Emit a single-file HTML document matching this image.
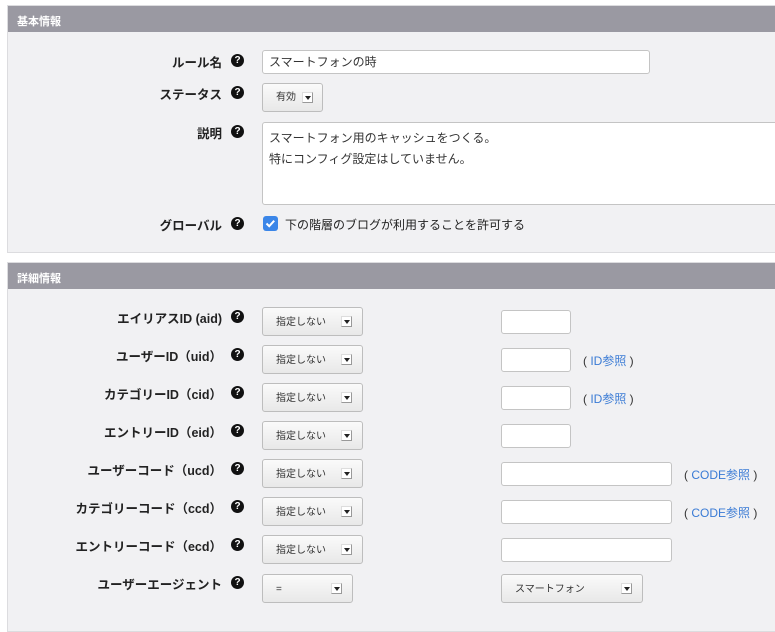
<!DOCTYPE html>
<html><head><meta charset="utf-8"><style>
*{box-sizing:border-box;margin:0;padding:0}
body{width:775px;height:620px;overflow:hidden;background:#fff;font-family:"Liberation Sans","Noto Sans CJK JP",sans-serif;font-size:12px;color:#333;position:relative}
.panel{position:absolute;left:7px;width:780px;background:#f1f1f3;border:1px solid #dcdcdf}
.hd{height:26px;background:#9a99a2;color:#fff;font-weight:bold;font-size:11px;padding:7px 0 0 9px}
.ab{position:absolute}
.lbl{position:absolute;right:553px;font-weight:bold;font-size:12.5px;color:#222;white-space:nowrap;margin-top:-2px}
.q{position:absolute;left:231px;width:13px;height:13px;border-radius:50%;background:#111;color:#fff;font-size:10px;font-weight:bold;text-align:center;line-height:13px}
.inp{position:absolute;background:#fff;border:1px solid #c4c4c4;border-radius:3px;font-size:12px;padding:0 6px}
.sel{position:absolute;background:linear-gradient(#fafafa,#e8e8e8);border:1px solid #bdbdbd;border-radius:3px;font-size:10px;color:#333;padding-left:13px}
.sel i{position:absolute;right:10px;top:8px;width:11px;height:11px;background:#fff;border:1px solid #999;border-top-color:#ddd;border-left-color:#ddd}
.sel i:after{content:"";position:absolute;left:2px;top:3px;border:3px solid transparent;border-top:4px solid #222}
.lk{position:absolute;color:#3a7bd5;font-size:12px}
.lk b{color:#333;font-weight:normal}
</style></head><body>
<div class="panel" style="top:5px;height:248px"><div class="hd">基本情報</div></div>
<div class="panel" style="top:262px;height:370px"><div class="hd">詳細情報</div></div>

<div class="lbl" style="top:54px">ルール名</div><div class="q" style="top:54px">?</div>
<div class="inp" style="left:262px;top:50px;width:388px;height:24px;line-height:22px;font-size:12px">スマートフォンの時</div>
<div class="lbl" style="top:86px">ステータス</div><div class="q" style="top:86px">?</div>
<div class="sel" style="left:262px;top:83px;width:61px;height:29px;line-height:28px">有効<i style="right:9px"></i></div>
<div class="lbl" style="top:125px">説明</div><div class="q" style="top:125px">?</div>
<div class="inp" style="left:262px;top:122px;width:520px;height:83px;padding-top:5px;line-height:21px">スマートフォン用のキャッシュをつくる。<br>特にコンフィグ設定はしていません。</div>
<div class="lbl" style="top:217px">グローバル</div><div class="q" style="top:217px">?</div>
<div class="ab" style="left:263px;top:216px;width:15px;height:15px;border-radius:3px;background:#3b86e8"><svg width="15" height="15"><path d="M3.5 7.5l2.7 2.7 5-5.5" stroke="#fff" stroke-width="2" fill="none"/></svg></div>
<div class="ab" style="left:285px;top:216px;font-size:12px;color:#222">下の階層のブログが利用することを許可する</div>

<div class="lbl" style="top:310px">エイリアスID (aid)</div><div class="q" style="top:310px">?</div>
<div class="sel" style="left:262px;top:307px;width:101px;height:29px;line-height:29px">指定しない<i></i></div>
<div class="inp" style="left:501px;top:310px;width:70px;height:24px"></div>

<div class="lbl" style="top:348px">ユーザーID（uid）</div><div class="q" style="top:348px">?</div>
<div class="sel" style="left:262px;top:345px;width:101px;height:29px;line-height:29px">指定しない<i></i></div>
<div class="inp" style="left:501px;top:348px;width:70px;height:24px"></div>
<div class="lk" style="left:583px;top:352px"><b>(</b> ID参照 <b>)</b></div>

<div class="lbl" style="top:386px">カテゴリーID（cid）</div><div class="q" style="top:386px">?</div>
<div class="sel" style="left:262px;top:383px;width:101px;height:29px;line-height:29px">指定しない<i></i></div>
<div class="inp" style="left:501px;top:386px;width:70px;height:24px"></div>
<div class="lk" style="left:583px;top:390px"><b>(</b> ID参照 <b>)</b></div>

<div class="lbl" style="top:424px">エントリーID（eid）</div><div class="q" style="top:424px">?</div>
<div class="sel" style="left:262px;top:421px;width:101px;height:29px;line-height:29px">指定しない<i></i></div>
<div class="inp" style="left:501px;top:424px;width:70px;height:24px"></div>

<div class="lbl" style="top:462px">ユーザーコード（ucd）</div><div class="q" style="top:462px">?</div>
<div class="sel" style="left:262px;top:459px;width:101px;height:29px;line-height:29px">指定しない<i></i></div>
<div class="inp" style="left:501px;top:462px;width:171px;height:24px"></div>
<div class="lk" style="left:684px;top:466px"><b>(</b> CODE参照 <b>)</b></div>

<div class="lbl" style="top:500px">カテゴリーコード（ccd）</div><div class="q" style="top:500px">?</div>
<div class="sel" style="left:262px;top:497px;width:101px;height:29px;line-height:29px">指定しない<i></i></div>
<div class="inp" style="left:501px;top:500px;width:171px;height:24px"></div>
<div class="lk" style="left:684px;top:504px"><b>(</b> CODE参照 <b>)</b></div>

<div class="lbl" style="top:538px">エントリーコード（ecd）</div><div class="q" style="top:538px">?</div>
<div class="sel" style="left:262px;top:535px;width:101px;height:29px;line-height:29px">指定しない<i></i></div>
<div class="inp" style="left:501px;top:538px;width:171px;height:24px"></div>

<div class="lbl" style="top:576px">ユーザーエージェント</div><div class="q" style="top:576px">?</div>
<div class="sel" style="left:262px;top:574px;width:91px;height:29px;line-height:29px">=<i></i></div>
<div class="sel" style="left:501px;top:574px;width:142px;height:29px;line-height:29px">スマートフォン<i></i></div>
</body></html>
